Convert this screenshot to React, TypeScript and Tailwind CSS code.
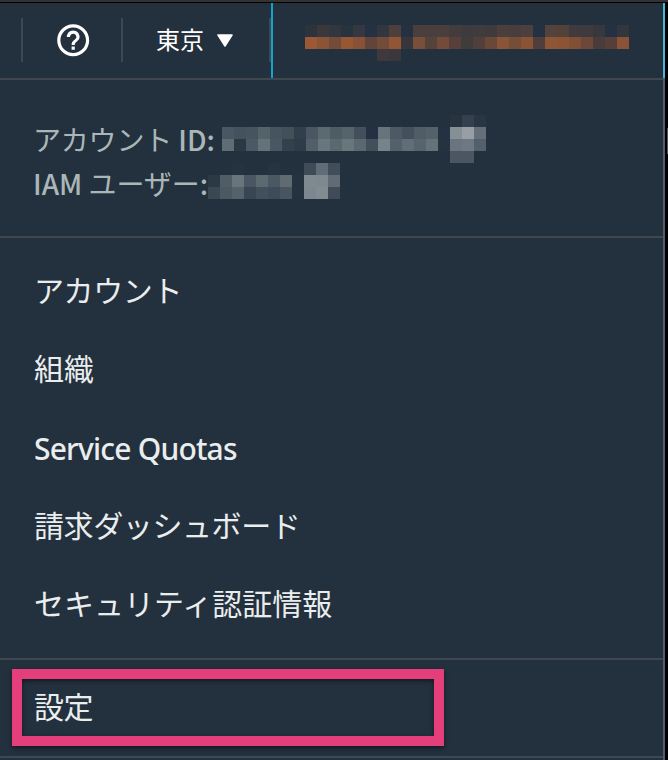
import type { ReactNode } from "react";

type MosaicProps = { rows: string[]; className?: string };

const CELL = 12;

// Each row is a space separated list of hex colours; "-" leaves a cell empty.
function Mosaic({ rows, className = "" }: MosaicProps) {
  const cells = rows.map((row) => row.split(" "));
  const width = Math.max(...cells.map((r) => r.length)) * CELL;
  return (
    <svg className={className} width={width} height={rows.length * CELL} shapeRendering="crispEdges" aria-hidden="true">
      {cells.map((row, y) =>
        row.map((c, x) =>
          c === "-" ? null : <rect key={`${x}-${y}`} x={x * CELL} y={y * CELL} width={CELL} height={CELL} fill={`#${c}`} />,
        ),
      )}
    </svg>
  );
}

const userName = [
  "2b343c 3a383c 34363f 27333f 353840 253142 32363f 4c3f3c 253042 4b3f3e 4a3e3e 4b3f3d 433c3d 3d3a40 403c3d 3f3a3e 4b3f3d 483e3d 4b403e 253142 54423c 54423a 403a3e 3f3a3e 38373d 253142 33363f",
  "9b5835 8a5437 734b38 975634 895236 61443a 724c39 925536 38363c 784f39 55423b 744b38 583f3a 403c3c 503f3b 694838 8a5436 764d38 8b5335 4f3e3b 8f5537 8d5335 814f36 6d4838 493c3b 563f39 8a5236",
  "- - - - - - 3f393d 3a383d",
];

const accountId = [
  "- - - - - - - - - - - - - - - - - - - 27333f 34404d 293642",
  "4a5663 44525d 46545e 546269 465460 445058 313e4b 4b5663 5b6970 4f5b65 54646b 43505c 253042 66757b 4d5a63 44505b 505d67 53626a 243143 858f96 979fa5 656f79",
  "5f6d75 2b3945 4c5864 64727a 4a5763 33414e 2e3b48 525f69 67777d 5a6870 69777d 5b6870 43505b 74848a 54616c 616e77 57646e 64737a 253240 69747e 6d7882 53606b",
  "- - - - - - - - - - - - - - - - - - - 4b5662 4b5662",
];

const iamUser = [
  "- - 26333f - - 27333f - - 3f4c58 616c77 414d59",
  "2b3945 505d66 69757d 4a5663 5b6970 4a5864 5f6b71 253240 7f8990 7e8890 616b75",
  "3b4753 4b5962 54626a 394552 43505c 3e4b58 47555e 25323f 7e878f 828b92 3f4b57",
];

function Divider() {
  return <div className="h-11 w-0.5 shrink-0 bg-[#414750]" />;
}

function MenuItem({ children }: { children: ReactNode }) {
  return <li className="flex flex-1 items-center pb-[5px] whitespace-nowrap">{children}</li>;
}

export default function App() {
  return (
    <div className="flex h-[760px] w-[668px] flex-col overflow-hidden bg-[#23303d] font-['Noto_Sans_CJK_JP',sans-serif] text-[#eaeded]">
      <div className="h-[3px] shrink-0 border-b border-black bg-[#333333]" />
      <div className="flex min-h-0 flex-1">
        <div className="flex w-[663px] flex-col">
          <header className="flex h-[77px] shrink-0 border-b-2 border-[#414750]">
            <div className="flex w-[271px] items-start pt-[15px] pl-[21px]">
              <Divider />
              <div className="flex h-11 w-[98px] items-center justify-center">
                <svg width="38.4" height="38.4" viewBox="0 0 24 24" fill="white" className="relative left-px">
                  <path d="M11 18h2v-2h-2v2zm1-16C6.48 2 2 6.48 2 12s4.48 10 10 10 10-4.48 10-10S17.520 2 12 2zm0 18c-4.410 0-8-3.590-8-8s3.590-8 8-8 8 3.590 8 8-3.590 8-8 8zm0-14c-2.210 0-4 1.790-4 4h2c0-1.100.9-2 2-2s2 .9 2 2c0 2-3 1.750-3 5h2c0-2.250 3-2.500 3-5 0-2.210-1.790-4-4-4z" />
                </svg>
              </div>
              <Divider />
              <div className="flex h-11 w-[146px] items-center pl-[33px] text-[24px] leading-none text-white">
                <span className="pb-0.5">東京</span>
                <svg width="16" height="13" viewBox="0 0 16 13" className="ml-[13px]">
                  <path d="M1 1h14L8 12z" fill="white" stroke="white" strokeWidth="1.500" strokeLinejoin="round" />
                </svg>
              </div>
              <Divider />
            </div>
            <div className="flex-1 border-l-2 border-[#12a5cb] pt-[22px] pl-8">
              <Mosaic rows={userName} />
            </div>
          </header>

          <section className="h-[158px] shrink-0 border-b-2 border-[#41474e] pt-[38px] pl-[33px] text-[28px] leading-[42px] text-[#aab7b8]">
            <div className="flex h-11 items-start">
              <span className="w-[189px] whitespace-nowrap">
                <span className="tracking-[-0.2px]">アカウント</span> <span className="font-medium">ID:</span>
              </span>
              <Mosaic rows={accountId} className="-mt-[3px] shrink-0" />
            </div>
            <div className="flex h-11 items-start">
              <span className="w-[175px] whitespace-nowrap">
                <span className="font-medium">IAM</span> <span className="tracking-[-0.1px]">ユーザー</span>
                <span className="font-medium">:</span>
              </span>
              <Mosaic rows={iamUser} className="mt-px shrink-0" />
            </div>
          </section>

          <ul className="flex h-[422px] shrink-0 flex-col border-b-2 border-[#414750] py-3.5 pl-[34px] text-[30px] leading-none">
            <MenuItem>
              <span className="tracking-[-0.4px]">アカウント</span>
            </MenuItem>
            <MenuItem>組織</MenuItem>
            <MenuItem>
              <span className="pt-1.5 font-['Noto_Sans',sans-serif] font-medium tracking-[-0.8px]">Service Quotas</span>
            </MenuItem>
            <MenuItem>
              <span className="tracking-[-0.4px]">請求ダッシュボード</span>
            </MenuItem>
            <MenuItem>セキュリティ認証情報</MenuItem>
          </ul>

          <div className="h-[98px] shrink-0 border-b-2 border-[#414750] pt-[9px] pl-3">
            <div className="flex h-[77px] w-[432px] items-center border-10 border-[#e53f7b] pb-[5px] pl-3 text-[30px] leading-none shadow-[0_2px_4px_rgba(0,0,0,0.5),inset_0_2px_4px_rgba(0,0,0,0.5)]">
              <span className="tracking-[-0.5px]">設定</span>
            </div>
          </div>
        </div>
        <div className="flex w-0.5 flex-col">
          <div className="h-[75px] bg-[#4ab5d5]" />
          <div className="flex-1 bg-[#525d69]" />
        </div>
        <div className="flex w-[3px] flex-col items-end bg-black pt-[125px]">
          <div className="h-[26px] w-px bg-[#555555]" />
        </div>
      </div>
    </div>
  );
}
